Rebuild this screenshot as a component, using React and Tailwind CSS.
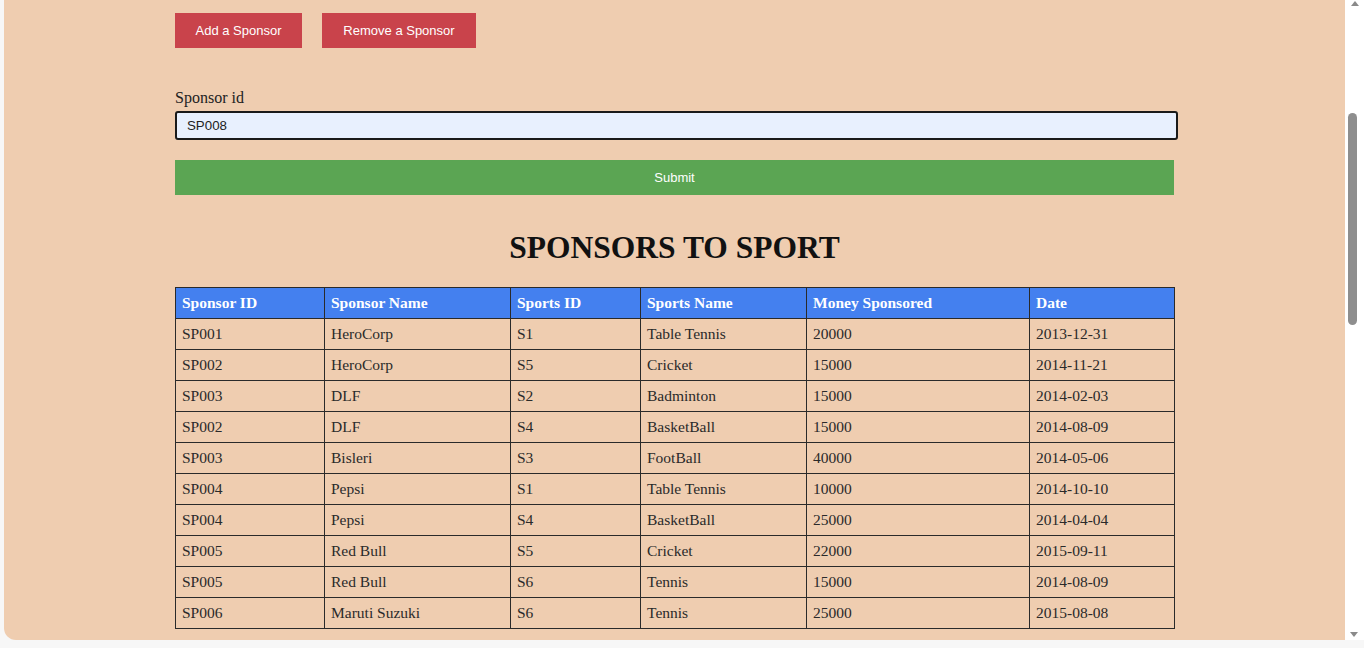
import React from 'react';

const rows = [
  ['SP001', 'HeroCorp', 'S1', 'Table Tennis', '20000', '2013-12-31'],
  ['SP002', 'HeroCorp', 'S5', 'Cricket', '15000', '2014-11-21'],
  ['SP003', 'DLF', 'S2', 'Badminton', '15000', '2014-02-03'],
  ['SP002', 'DLF', 'S4', 'BasketBall', '15000', '2014-08-09'],
  ['SP003', 'Bisleri', 'S3', 'FootBall', '40000', '2014-05-06'],
  ['SP004', 'Pepsi', 'S1', 'Table Tennis', '10000', '2014-10-10'],
  ['SP004', 'Pepsi', 'S4', 'BasketBall', '25000', '2014-04-04'],
  ['SP005', 'Red Bull', 'S5', 'Cricket', '22000', '2015-09-11'],
  ['SP005', 'Red Bull', 'S6', 'Tennis', '15000', '2014-08-09'],
  ['SP006', 'Maruti Suzuki', 'S6', 'Tennis', '25000', '2015-08-08'],
];

const headers = [
  ['Sponsor ID', 'w-[149px]'],
  ['Sponsor Name', 'w-[186px]'],
  ['Sports ID', 'w-[130px]'],
  ['Sports Name', 'w-[166px]'],
  ['Money Sponsored', 'w-[223px]'],
  ['Date', 'w-[145px]'],
];

export default function App() {
  return (
    <div className="h-[648px] w-[1364px] bg-[#f7f7f7] flex overflow-hidden">
      {/* page area */}
      <div className="ml-1 mb-2 flex-1 bg-[#efcdb0] rounded-bl-xl overflow-hidden">
        <div className="ml-[171px] w-[999px] pt-[13px]">
          {/* Action buttons */}
          <div className="flex gap-5" style={{ fontFamily: '"Liberation Sans", Arial, sans-serif' }}>
            <button className="h-[35px] w-[127px] bg-[#c9434b] text-white text-[13px]">Add a Sponsor</button>
            <button className="h-[35px] w-[154px] bg-[#c9434b] text-white text-[13px]">Remove a Sponsor</button>
          </div>

          {/* Form */}
          <div className="mt-[40px]">
            <label className="block text-[16px] leading-[20px] text-[#222]" style={{ fontFamily: '"Liberation Serif", serif' }}>
              Sponsor id
            </label>
            <input
              readOnly
              value="SP008"
              className="mt-[3px] w-[1003px] h-[29px] rounded-[3px] border-2 border-[#1a1a1a] bg-[#e8f0fe] px-[10px] text-[13.3px] text-[#222] outline-none"
              style={{ fontFamily: '"Liberation Sans", Arial, sans-serif' }}
            />
            <button
              className="mt-[20px] block w-[999px] h-[35px] bg-[#5ba553] text-white text-[13px]"
              style={{ fontFamily: '"Liberation Sans", Arial, sans-serif' }}
            >
              Submit
            </button>
          </div>

          {/* Heading */}
          <h1
            className="mt-[33px] text-center text-[31.5px] font-bold leading-[40px] text-[#111]"
            style={{ fontFamily: '"Liberation Serif", serif' }}
          >
            SPONSORS TO SPORT
          </h1>

          {/* Table */}
          <table
            className="mt-[19px] w-[999px] table-fixed border-collapse border border-[#2a2a2a] text-[15.5px]"
            style={{ fontFamily: '"Liberation Serif", serif' }}
          >
            <thead>
              <tr className="bg-[#4480ef] text-white">
                {headers.map(([h, w]) => (
                  <th key={h} className={`${w} h-[31px] border border-[#2a2a2a] px-[6px] text-left font-bold`}>
                    {h}
                  </th>
                ))}
              </tr>
            </thead>
            <tbody>
              {rows.map((r, i) => (
                <tr key={i} className="text-[#2a2a2a]">
                  {r.map((c, j) => (
                    <td key={j} className="h-[31px] border border-[#2a2a2a] px-[6px]">
                      {c}
                    </td>
                  ))}
                </tr>
              ))}
            </tbody>
          </table>
        </div>
      </div>

      {/* scrollbar */}
      <div className="w-[19px] mb-2 bg-white flex flex-col items-center relative">
        <div className="mt-[1px] w-0 h-0 border-l-[4px] border-r-[4px] border-b-[5px] border-l-transparent border-r-transparent border-b-[#8a8a8a]" />
        <div className="absolute left-[3px] top-[113px] w-[9px] h-[212px] rounded-full bg-[#8e8e8e]" />
        <div className="absolute bottom-[3px] left-[5px] w-0 h-0 border-l-[4px] border-r-[4px] border-t-[5px] border-l-transparent border-r-transparent border-t-[#8a8a8a]" />
      </div>
    </div>
  );
}
